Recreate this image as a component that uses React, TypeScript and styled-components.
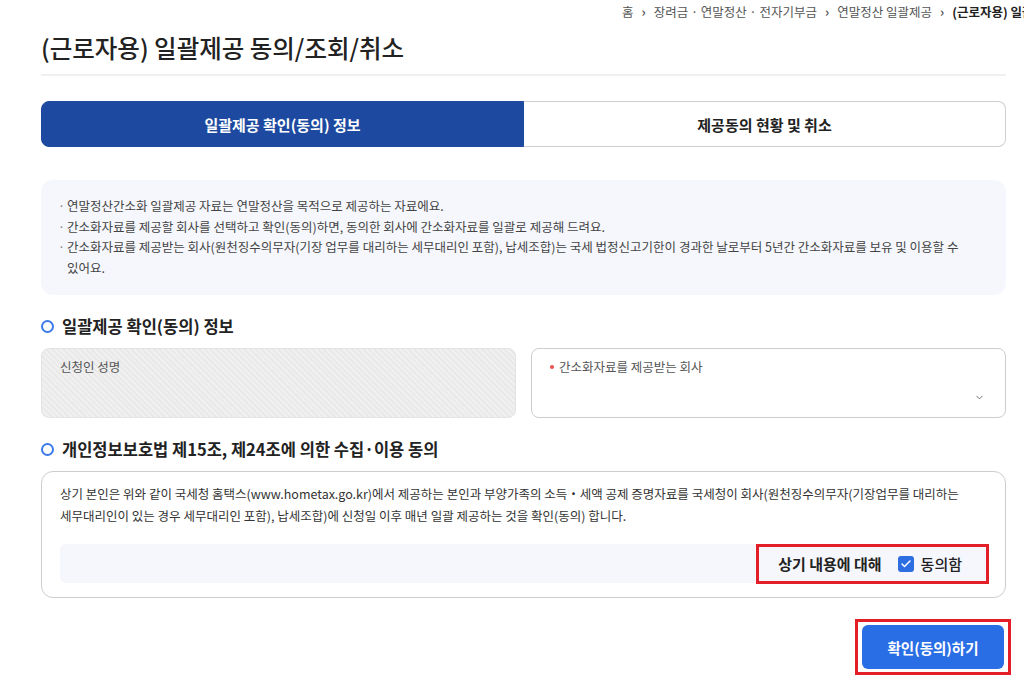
import React from "react";
import styled, { createGlobalStyle } from "styled-components";
import { ChevronDown, Check } from "lucide-react";

const Global = createGlobalStyle`
  html, body { margin: 0; padding: 0; background: #fff; overflow: hidden; }
  body { font-family: "Noto Sans CJK KR", "Noto Sans", sans-serif; color: #222; }
  * { box-sizing: border-box; }
`;

const Page = styled.div`
  width: 965px;
  margin-left: 41px;
  display: flex;
  flex-direction: column;
`;

const Breadcrumb = styled.nav`
  height: 22px;
  display: flex;
  justify-content: flex-end;
  align-items: center;
  gap: 8px;
  margin-right: -132px;
  white-space: nowrap;
  font-size: 12.5px;
  color: #555;
`;

const Crumb = styled.span<{ $current?: boolean }>`
  font-weight: ${(p) => (p.$current ? 700 : 400)};
  color: ${(p) => (p.$current ? "#222" : "#555")};
`;

const Sep = styled.span`
  font-weight: 700;
  color: #555;
  font-size: 13px;
`;

const Title = styled.h1`
  margin: 10px 0 0;
  padding-bottom: 10px;
  font-size: 24.5px;
  line-height: 32px;
  font-weight: 500;
  color: #222;
  border-bottom: 2px solid #f0f0f0;
`;

const Tabs = styled.div`
  margin-top: 25px;
  display: grid;
  grid-template-columns: 483px 1fr;
  height: 46px;
`;

const Tab = styled.button<{ $active?: boolean }>`
  font-family: inherit;
  font-size: 15px;
  font-weight: 700;
  cursor: pointer;
  border: 1px solid ${(p) => (p.$active ? "#1d4aa0" : "#cfcfcf")};
  background: ${(p) => (p.$active ? "#1d4aa0" : "#fff")};
  color: ${(p) => (p.$active ? "#fff" : "#222")};
  border-radius: ${(p) => (p.$active ? "8px 0 0 8px" : "0 8px 8px 0")};
  ${(p) => (!p.$active ? "border-left: none;" : "")}
`;

const InfoBox = styled.ul`
  margin: 33px 0 0;
  padding: 16px 17px 17px 17px;
  list-style: none;
  background: #f5f7fc;
  border-radius: 12px;
  font-size: 12.5px;
  line-height: 20.5px;
  color: #444;
  word-break: keep-all;
`;

const InfoItem = styled.li`
  display: flex;
  gap: 4px;
  &::before {
    content: "·";
    color: #888;
    width: 5px;
    flex: none;
  }
`;

const Heading = styled.h2<{ $top: number }>`
  margin: ${(p) => p.$top}px 0 0;
  display: flex;
  align-items: center;
  gap: 8px;
  font-size: 16.5px;
  line-height: 24px;
  font-weight: 700;
  color: #222;
  &::before {
    content: "";
    width: 9px;
    height: 9px;
    border-radius: 50%;
    border: 2.5px solid #3b7be9;
    flex: none;
  }
`;

const FieldGrid = styled.div`
  margin-top: 10px;
  display: grid;
  grid-template-columns: 1fr 1fr;
  gap: 15px;
`;

const Field = styled.div<{ $disabled?: boolean }>`
  height: 70px;
  border-radius: 8px;
  padding: 9px 18px;
  display: flex;
  flex-direction: column;
  border: 1px solid ${(p) => (p.$disabled ? "#e3e3e3" : "#cdcdcd")};
  background: ${(p) =>
    p.$disabled
      ? "repeating-linear-gradient(45deg, #f0f0f0 0 2px, #e9e9e9 2px 4px)"
      : "#fff"};
`;

const FieldLabel = styled.div<{ $required?: boolean }>`
  font-size: 12.5px;
  line-height: 18px;
  color: #555;
  display: flex;
  align-items: center;
  gap: 5px;
  ${(p) =>
    p.$required
      ? `&::before { content: ""; width: 4px; height: 4px; border-radius: 50%; background: #f0504a; }`
      : ""}
`;

const SelectRow = styled.div`
  flex: 1;
  display: flex;
  justify-content: flex-end;
  align-items: center;
  padding-top: 10px;
  padding-right: 2px;
  color: #666;
`;

const ConsentBox = styled.div`
  margin-top: 10px;
  border: 1px solid #cdcdcd;
  border-radius: 12px;
  padding: 11px 19px 14px 18px;
`;

const ConsentText = styled.p`
  margin: 0;
  font-size: 12.5px;
  line-height: 22px;
  color: #333;
  word-break: keep-all;
`;

const AgreeBar = styled.div`
  margin-top: 17px;
  height: 39px;
  background: #f6f7fc;
  border-radius: 6px;
  display: flex;
  justify-content: flex-end;
  align-items: center;
`;

const Highlight = styled.div`
  display: flex;
  align-items: center;
  border: 3px solid #e41e27;
  margin-right: -3px;
`;

const AgreeGroup = styled.label`
  display: flex;
  align-items: center;
  height: 34px;
  padding: 0 24px 0 19px;
  font-size: 15px;
  font-weight: 700;
  color: #222;
`;

const AgreeLead = styled.span`
  margin-right: 16px;
`;

const CheckBox = styled.span`
  width: 16px;
  height: 16px;
  border-radius: 3px;
  background: #2d6ee3;
  display: inline-flex;
  align-items: center;
  justify-content: center;
  margin-right: 7px;
  color: #fff;
`;

const AgreeText = styled.span`
  font-weight: 500;
`;

const Footer = styled.div`
  margin-top: 21px;
  display: flex;
  justify-content: flex-end;
  margin-right: -5px;
`;

const ButtonHighlight = styled.div`
  border: 3px solid #e41e27;
  padding: 3px 4px;
`;

const PrimaryButton = styled.button`
  width: 142px;
  height: 44px;
  border: none;
  border-radius: 6px;
  background: #2a6ee6;
  color: #fff;
  font-family: inherit;
  font-size: 14.5px;
  font-weight: 700;
  cursor: pointer;
`;

export default function App() {
  return (
    <>
      <Global />
      <Page>
        <Breadcrumb>
          <Crumb>홈</Crumb>
          <Sep>›</Sep>
          <Crumb>장려금 · 연말정산 · 전자기부금</Crumb>
          <Sep>›</Sep>
          <Crumb>연말정산 일괄제공</Crumb>
          <Sep>›</Sep>
          <Crumb $current>(근로자용) 일괄제공 동의/조회/취소</Crumb>
        </Breadcrumb>
        <Title>(근로자용) 일괄제공 동의/조회/취소</Title>
        <Tabs>
          <Tab $active>일괄제공 확인(동의) 정보</Tab>
          <Tab>제공동의 현황 및 취소</Tab>
        </Tabs>
        <InfoBox>
          <InfoItem>연말정산간소화 일괄제공 자료는 연말정산을 목적으로 제공하는 자료에요.</InfoItem>
          <InfoItem>간소화자료를 제공할 회사를 선택하고 확인(동의)하면, 동의한 회사에 간소화자료를 일괄로 제공해 드려요.</InfoItem>
          <InfoItem>
            간소화자료를 제공받는 회사(원천징수의무자(기장 업무를 대리하는 세무대리인 포함), 납세조합)는 국세 법정신고기한이 경과한 날로부터 5년간 간소화자료를 보유 및 이용할 수 있어요.
          </InfoItem>
        </InfoBox>
        <Heading $top={19}>일괄제공 확인(동의) 정보</Heading>
        <FieldGrid>
          <Field $disabled>
            <FieldLabel>신청인 성명</FieldLabel>
          </Field>
          <Field>
            <FieldLabel $required>간소화자료를 제공받는 회사</FieldLabel>
            <SelectRow>
              <ChevronDown size={11} strokeWidth={2} />
            </SelectRow>
          </Field>
        </FieldGrid>
        <Heading $top={19}>개인정보보호법 제15조, 제24조에 의한 수집·이용 동의</Heading>
        <ConsentBox>
          <ConsentText>
            상기 본인은 위와 같이 국세청 홈택스(www.hometax.go.kr)에서 제공하는 본인과 부양가족의 소득・세액 공제 증명자료를 국세청이 회사(원천징수의무자(기장업무를 대리하는 세무대리인이 있는 경우 세무대리인 포함), 납세조합)에 신청일 이후 매년 일괄 제공하는 것을 확인(동의) 합니다.
          </ConsentText>
          <AgreeBar>
            <Highlight>
              <AgreeGroup>
                <AgreeLead>상기 내용에 대해</AgreeLead>
                <CheckBox>
                  <Check size={12} strokeWidth={3} />
                </CheckBox>
                <AgreeText>동의함</AgreeText>
              </AgreeGroup>
            </Highlight>
          </AgreeBar>
        </ConsentBox>
        <Footer>
          <ButtonHighlight>
            <PrimaryButton>확인(동의)하기</PrimaryButton>
          </ButtonHighlight>
        </Footer>
      </Page>
    </>
  );
}
